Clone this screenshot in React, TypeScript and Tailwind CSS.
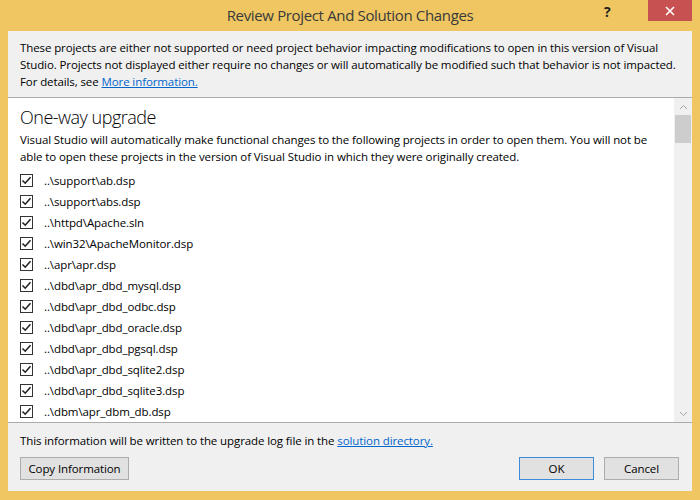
import React from "react";

const projects = [
    "..\\support\\ab.dsp",
    "..\\support\\abs.dsp",
    "..\\httpd\\Apache.sln",
    "..\\win32\\ApacheMonitor.dsp",
    "..\\apr\\apr.dsp",
    "..\\dbd\\apr_dbd_mysql.dsp",
    "..\\dbd\\apr_dbd_odbc.dsp",
    "..\\dbd\\apr_dbd_oracle.dsp",
    "..\\dbd\\apr_dbd_pgsql.dsp",
    "..\\dbd\\apr_dbd_sqlite2.dsp",
    "..\\dbd\\apr_dbd_sqlite3.dsp",
    "..\\dbm\\apr_dbm_db.dsp",
    "..\\dbm\\apr_dbm_gdbm.dsp",
];

function CheckBox() {
    return (
        <div className="w-[13px] h-[13px] border border-[#333333] bg-white flex items-center justify-center shrink-0">
            <svg width="11" height="11" viewBox="0 0 11 11">
                <path d="M1.5 5.5 L4.2 8.2 L9.5 2.2" fill="none" stroke="#222" strokeWidth="1.6" />
            </svg>
        </div>
    );
}

function Button({ label, focused }: { label: string; focused?: boolean }) {
    return (
        <button
            className={
                "w-full h-[23px] text-[11.5px] tracking-[-0.1px] text-black bg-[#E1E1E1] border " +
                (focused ? "border-[#3C8CD8]" : "border-[#ADADAD]")
            }
        >
            {label}
        </button>
    );
}

export default function App() {
    return (
        <div
            className="w-[700px] h-[500px] bg-[#EFC661] flex flex-col overflow-hidden"
            style={{ fontFamily: "'Open Sans', 'Noto Sans', sans-serif" }}
        >
            {/* Title bar */}
            <div className="h-[31px] relative flex items-center justify-center shrink-0">
                <span className="text-[15px] tracking-[-0.35px] text-[#3A3A3A] -mt-[1px]">Review Project And Solution Changes</span>
                <span className="absolute left-[604px] top-[1px] text-[14px] font-bold text-[#222]">?</span>
                <div className="absolute right-[8px] top-0 w-[44px] h-[21px] bg-[#C75050] flex items-center justify-center">
                    <svg width="10" height="10" viewBox="0 0 10 10">
                        <path d="M1 1 L9 9 M9 1 L1 9" stroke="white" strokeWidth="1.6" />
                    </svg>
                </div>
            </div>

            {/* Client area */}
            <div className="mx-[8px] h-[460px] bg-[#F0F0F0] flex flex-col text-[11.5px] tracking-[-0.1px]">
                <div className="h-[66px] px-[12px] pt-[8px] leading-[17px] text-black">
                    These projects are either not supported or need project behavior impacting modifications to open in this version of Visual Studio. Projects not displayed either require no changes or will automatically be modified such that behavior is not impacted. For details, see{" "}
                    <span className="text-[#0066CC] underline">More information.</span>
                </div>

                <div className="h-[326px] bg-white border-t border-b border-[#ABABAB] flex">
                    <div className="flex-1 overflow-hidden pl-[12px] pr-[4px] pt-[6px]">
                        <div className="text-[18px] tracking-[-0.5px] leading-[26px] font-light text-black">One-way upgrade</div>
                        <div className="leading-[17px] text-black mt-[1px]">
                            Visual Studio will automatically make functional changes to the following projects in order to open them. You will not be able to open these projects in the version of Visual Studio in which they were originally created.
                        </div>
                        <div className="mt-[5px] flex flex-col">
                            {projects.map((p) => (
                                <div key={p} className="h-[21px] flex items-center gap-[11px]">
                                    <CheckBox />
                                    <span className="text-black">{p}</span>
                                </div>
                            ))}
                        </div>
                    </div>
                    {/* Scrollbar */}
                    <div className="w-[18px] bg-[#F0F0F0] flex flex-col">
                        <div className="h-[17px] flex items-center justify-center">
                            <svg width="9" height="6" viewBox="0 0 9 6">
                                <path d="M1 5 L4.5 1.5 L8 5" fill="none" stroke="#A0A0A0" strokeWidth="1" />
                            </svg>
                        </div>
                        <div className="mx-[1px] h-[28px] bg-[#CDCDCD]" />
                        <div className="flex-1" />
                        <div className="h-[17px] flex items-center justify-center">
                            <svg width="9" height="6" viewBox="0 0 9 6">
                                <path d="M1 1 L4.5 4.5 L8 1" fill="none" stroke="#A0A0A0" strokeWidth="1" />
                            </svg>
                        </div>
                    </div>
                </div>

                <div className="flex-1 px-[12px] pt-[9px] flex flex-col">
                    <div className="leading-[17px] text-black">
                        This information will be written to the upgrade log file in the{" "}
                        <span className="text-[#0066CC] underline">solution directory.</span>
                    </div>
                    <div className="mt-[8px] flex items-center">
                        <div className="w-[109px] flex flex-col"><Button label="Copy Information" /></div>
                        <div className="flex-1" />
                        <div className="flex gap-[10px] mr-[1px]">
                            <div className="w-[75px] flex flex-col"><Button label="OK" focused /></div>
                            <div className="w-[75px] flex flex-col"><Button label="Cancel" /></div>
                        </div>
                    </div>
                </div>
            </div>
        </div>
    );
}
